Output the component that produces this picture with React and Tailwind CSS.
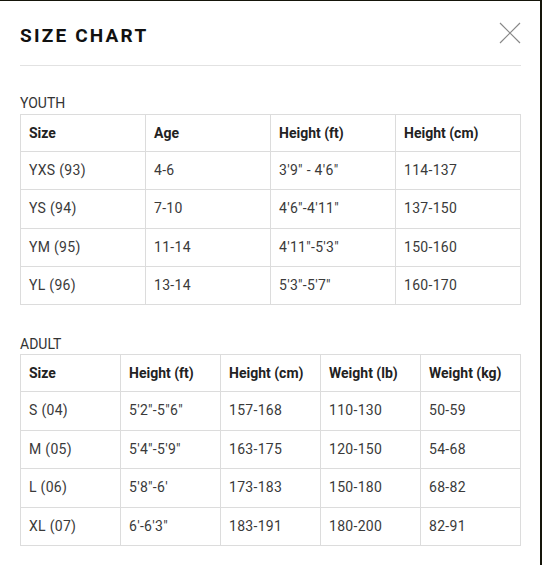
import React from "react";

const youthHead = ["Size", "Age", "Height (ft)", "Height (cm)"];
const youthRows = [
  ["YXS (93)", "4-6", "3'9\" - 4'6\"", "114-137"],
  ["YS (94)", "7-10", "4'6\"-4'11\"", "137-150"],
  ["YM (95)", "11-14", "4'11\"-5'3\"", "150-160"],
  ["YL (96)", "13-14", "5'3\"-5'7\"", "160-170"],
];
const adultHead = ["Size", "Height (ft)", "Height (cm)", "Weight (lb)", "Weight (kg)"];
const adultRows = [
  ["S (04)", "5'2\"-5\"6\"", "157-168", "110-130", "50-59"],
  ["M (05)", "5'4\"-5'9\"", "163-175", "120-150", "54-68"],
  ["L (06)", "5'8\"-6'", "173-183", "150-180", "68-82"],
  ["XL (07)", "6'-6'3\"", "183-191", "180-200", "82-91"],
];

function Table({ head, rows, rowClass }) {
  return (
    <table className="w-full table-fixed border-collapse border border-[#dcdcdc]">
      <thead>
        <tr className="h-[37px]">
          {head.map((h) => (
            <th key={h} className="border border-[#dcdcdc] pl-2 text-left align-middle text-[14px] font-bold text-[#222]">
              {h}
            </th>
          ))}
        </tr>
      </thead>
      <tbody>
        {rows.map((r, i) => (
          <tr key={i} className={rowClass}>
            {r.map((c, j) => (
              <td key={j} className="border border-[#dcdcdc] pl-2 align-middle text-[14px] text-[#3a3a3a] tracking-[0.3px]">
                {c}
              </td>
            ))}
          </tr>
        ))}
      </tbody>
    </table>
  );
}

export default function App() {
  return (
    <div
      className="h-[565px] w-[542px] bg-white border-t border-t-[#15150a] border-r-2 border-r-[#15150a] overflow-hidden"
      style={{ fontFamily: "Roboto, 'Liberation Sans', sans-serif" }}
    >
      <div className="pl-5 pr-[19px] pt-[24px]">
        <div className="flex items-start justify-between">
          <h1 className="text-[19px] font-bold tracking-[2.2px] text-[#111] leading-[20px] pt-[1px]">SIZE CHART</h1>
          <svg width="22" height="22" viewBox="0 0 22 22" className="-mt-[3px]">
            <path d="M1 1 L21 21 M21 1 L1 21" stroke="#888" strokeWidth="1.2" fill="none" />
          </svg>
        </div>
        <div className="mt-[19px] border-t border-[#e2e2e2]" />
        <div className="mt-[29px] text-[14px] text-[#333] leading-[16px] mb-[3px]">YOUTH</div>
        <Table head={youthHead} rows={youthRows} rowClass="h-[38.25px]" />
        <div className="mt-[31px] text-[14px] text-[#333] leading-[16px] mb-[2px]">ADULT</div>
        <Table head={adultHead} rows={adultRows} rowClass="h-[38.6px]" />
      </div>
    </div>
  );
}
